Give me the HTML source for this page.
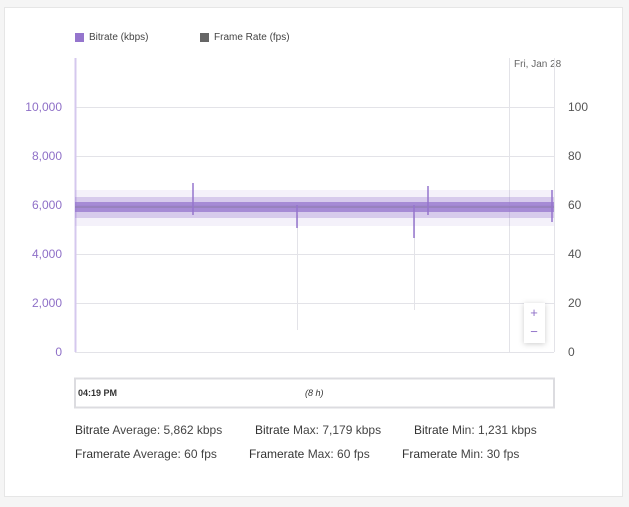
<!DOCTYPE html>
<html><head><style>
body{margin:0;width:629px;height:507px;background:#f5f5f5;font-family:"Liberation Sans",sans-serif;position:relative;overflow:hidden}
.card{position:absolute;left:4px;top:7px;width:617px;height:488px;background:#fff;border:1px solid #e6e6e6}
.t{position:absolute;font-size:12px;color:#333;white-space:nowrap}
.l{position:absolute;font-size:12px;color:#8e6fc7;text-align:right;width:60px;left:2px}
.r{position:absolute;font-size:12px;color:#555;left:568px}
</style></head><body>
<div class="card"></div>
<div style="position:absolute;left:75px;top:33px;width:9px;height:9px;background:#9575cd"></div>
<div class="t" style="left:89px;top:32px;font-size:10px;color:#444">Bitrate (kbps)</div>
<div style="position:absolute;left:200px;top:33px;width:9px;height:9px;background:#666"></div>
<div class="t" style="left:214px;top:32px;font-size:10px;color:#444">Frame Rate (fps)</div>
<div class="t" style="left:514px;top:59px;font-size:10px;color:#666">Fri, Jan 28</div>
<svg style="position:absolute;left:0;top:0" width="629" height="507">
<g stroke="#e3e3e8" stroke-width="1">
<line x1="75" y1="107.5" x2="554" y2="107.5"/><line x1="75" y1="156.5" x2="554" y2="156.5"/>
<line x1="75" y1="205.5" x2="554" y2="205.5"/><line x1="75" y1="254.5" x2="554" y2="254.5"/>
<line x1="75" y1="303.5" x2="554" y2="303.5"/><line x1="75" y1="352.5" x2="554" y2="352.5"/>
<line x1="509.5" y1="58" x2="509.5" y2="352"/><line x1="554.5" y1="58" x2="554.5" y2="352"/>
<line x1="297.5" y1="215" x2="297.5" y2="330"/><line x1="414.5" y1="215" x2="414.5" y2="310"/>
</g>
<line x1="75.5" y1="58" x2="75.5" y2="352" stroke="#d5c8ee" stroke-width="2"/>
<rect x="75" y="190" width="479" height="36" fill="#9575cd" opacity="0.1"/>
<rect x="75" y="197" width="479" height="21" fill="#9575cd" opacity="0.3"/>
<rect x="75" y="202" width="479" height="10" fill="#9575cd" opacity="0.75"/>
<line x1="75" y1="207" x2="554" y2="207" stroke="#8a7aa8" stroke-width="1"/>
<g stroke="#9575cd" stroke-width="1.5">
<line x1="297" y1="205" x2="297" y2="228"/><line x1="414" y1="205" x2="414" y2="238"/>
<line x1="193" y1="183" x2="193" y2="215"/><line x1="428" y1="186" x2="428" y2="215"/><line x1="552" y1="190" x2="552" y2="222"/>
</g>
<rect x="75" y="378.5" width="479" height="29" fill="#fff" stroke="#dcdce0" stroke-width="2"/>
<rect x="524" y="303" width="21" height="40" fill="#fff" style="filter:drop-shadow(0 1px 3px rgba(0,0,0,.2))"/>
<text x="534" y="317" font-size="13" fill="#8e6fc7" text-anchor="middle" font-family="Liberation Sans">+</text>
<text x="534" y="336" font-size="13" fill="#8e6fc7" text-anchor="middle" font-family="Liberation Sans">−</text>
</svg>
<div class="l" style="top:100px">10,000</div><div class="l" style="top:149px">8,000</div>
<div class="l" style="top:198px">6,000</div><div class="l" style="top:247px">4,000</div>
<div class="l" style="top:296px">2,000</div><div class="l" style="top:345px">0</div>
<div class="r" style="top:100px">100</div><div class="r" style="top:149px">80</div>
<div class="r" style="top:198px">60</div><div class="r" style="top:247px">40</div>
<div class="r" style="top:296px">20</div><div class="r" style="top:345px">0</div>
<div class="t" style="left:78px;top:388px;font-size:9px;font-weight:bold">04:19 PM</div>
<div class="t" style="left:305px;top:388px;font-size:9px;font-style:italic">(8 h)</div>
<div class="t" style="left:75px;top:423px">Bitrate <span style="color:#444">Average: 5,862 kbps</span></div>
<div class="t" style="left:255px;top:423px">Bitrate <span style="color:#444">Max: 7,179 kbps</span></div>
<div class="t" style="left:414px;top:423px">Bitrate <span style="color:#444">Min: 1,231 kbps</span></div>
<div class="t" style="left:75px;top:447px">Framerate <span style="color:#444">Average: 60 fps</span></div>
<div class="t" style="left:249px;top:447px">Framerate <span style="color:#444">Max: 60 fps</span></div>
<div class="t" style="left:402px;top:447px">Framerate <span style="color:#444">Min: 30 fps</span></div>
</body></html>
